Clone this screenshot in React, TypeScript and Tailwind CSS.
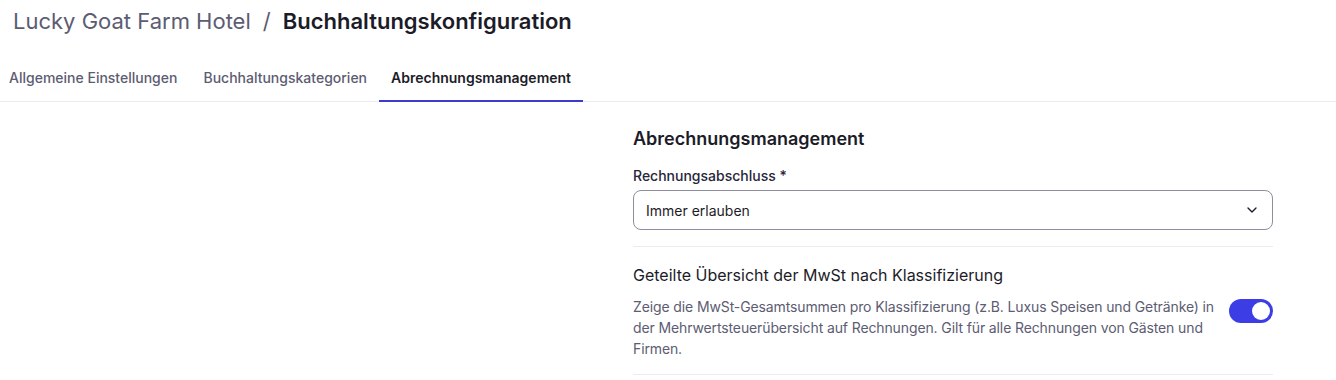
import { ChevronDown } from 'lucide-react';

export default function App() {
  return (
    <div className="min-h-[380px] bg-white text-[#1f1f2e]" style={{ fontFamily: 'Inter, "Noto Sans", sans-serif' }}>
      {/* Header */}
      <div className="px-[13px] pt-[7px]">
        <h1 className="text-[22px] leading-[28px]">
          <span className="text-[#5c5c72]">Lucky Goat Farm Hotel</span>
          <span className="text-[#5c5c72] mx-[12px]">/</span>
          <span className="font-semibold text-[#1c1c28]">Buchhaltungskonfiguration</span>
        </h1>
      </div>

      {/* Tabs */}
      <div className="mt-[33px] flex border-b border-[#ececf0] pl-[9px]">
        <div className="pb-[13px] mr-[26px] text-[14px] leading-[20px] font-medium text-[#5c5c72]">Allgemeine Einstellungen</div>
        <div className="pb-[13px] mr-[12px] text-[14px] leading-[20px] font-medium text-[#5c5c72]">Buchhaltungskategorien</div>
        <div className="-mb-px border-b-2 border-[#3c3cc8] px-[12px] pb-[12px] text-[14px] leading-[20px] font-semibold text-[#1c1c28]">Abrechnungsmanagement</div>
      </div>

      {/* Content */}
      <div className="grid grid-cols-[633px_640px]">
        <div />
        <div className="pt-[24px]">
          <h2 className="text-[18px] leading-[26px] font-semibold text-[#1c1c28]">Abrechnungsmanagement</h2>

          <div className="mt-[14px]">
            <label className="block text-[14px] leading-[20px] font-medium text-[#26263a]">Rechnungsabschluss *</label>
            <div className="mt-[4px] flex h-[40px] items-center justify-between rounded-lg border border-[#8e8ea0] px-[12px]">
              <span className="text-[14px] text-[#1c1c28]">Immer erlauben</span>
              <ChevronDown className="h-4 w-4 text-[#1c1c28]" strokeWidth={2} />
            </div>
          </div>

          <div className="mt-[16px] border-t border-[#ececf0] pt-[16px] pb-[15px] border-b">
            <div className="text-[16px] leading-[24px] text-[#1c1c28]">Geteilte Übersicht der MwSt nach Klassifizierung</div>
            <div className="mt-[9px] flex items-start justify-between gap-[12px]">
              <p className="text-[14px] leading-[21px] tracking-[-0.12px] text-[#5c5c72]">
                Zeige die MwSt-Gesamtsummen pro Klassifizierung (z.B. Luxus Speisen und Getränke) in der Mehrwertsteuerübersicht auf Rechnungen. Gilt für alle Rechnungen von Gästen und Firmen.
              </p>
              <div className="mt-[3px] flex h-[24px] w-[44px] shrink-0 items-center justify-end rounded-full bg-[#3d3de6] px-[3px]">
                <div className="h-[18px] w-[18px] rounded-full bg-white" />
              </div>
            </div>
          </div>
        </div>
      </div>
    </div>
  );
}
